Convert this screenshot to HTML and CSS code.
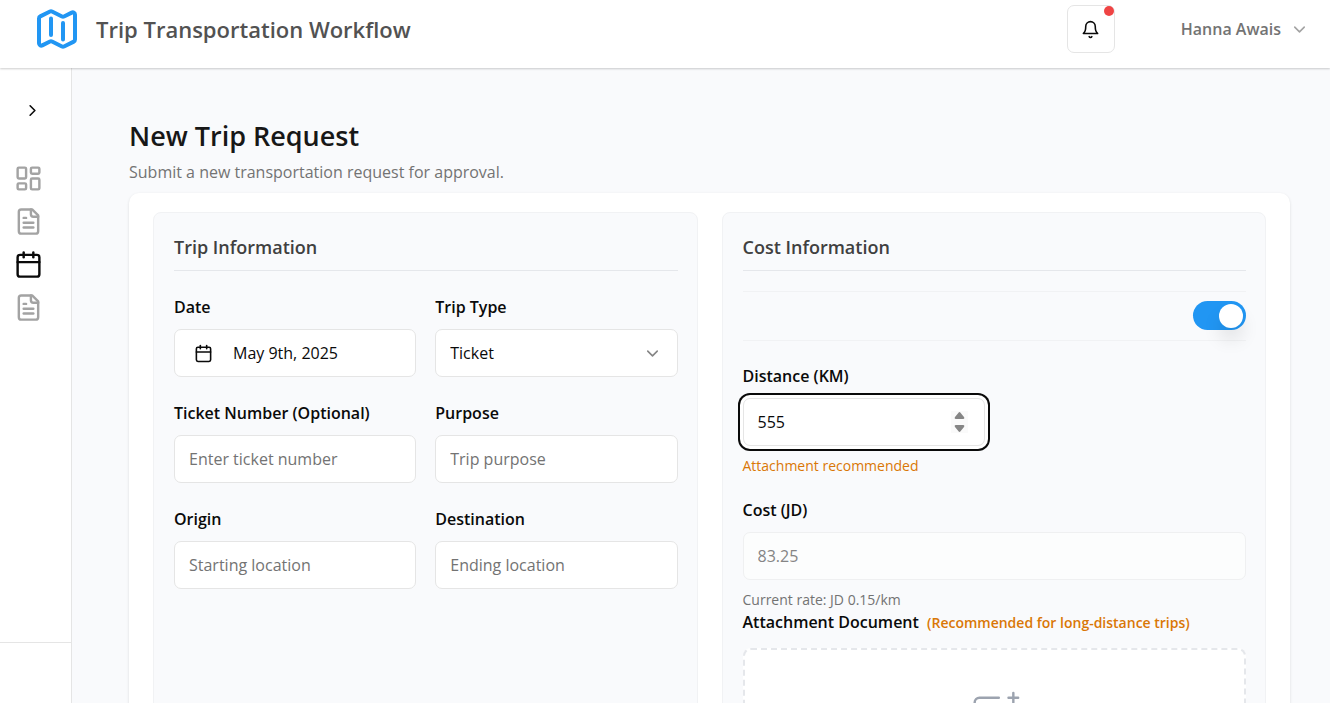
FILE: index.html
```html
<!DOCTYPE html>
<html lang="en">
<head>
<meta charset="utf-8">
<meta name="viewport" content="width=device-width, initial-scale=1">
<title>Trip Transportation Workflow</title>
<link rel="stylesheet" href="styles.css">
</head>
<body>
<div class="shell">
  <header class="topbar">
    <a class="brand" href="#">
      <svg class="brand-mark" viewBox="0 0 24 24" aria-hidden="true"><path d="M9 6.75V15m6-6v8.25m.503 3.498 4.875-2.437c.381-.19.622-.58.622-1.006V4.82c0-.836-.88-1.38-1.628-1.006l-3.869 1.934c-.317.159-.69.159-1.006 0L9.503 3.252a1.125 1.125 0 0 0-1.006 0L3.622 5.689C3.24 5.88 3 6.27 3 6.695V19.18c0 .836.88 1.38 1.628 1.006l3.869-1.934c.317-.159.69-.159 1.006 0l4.994 2.497c.317.158.69.158 1.006 0Z"/></svg>
      <span class="brand-name">Trip Transportation Workflow</span>
    </a>
    <div class="topbar-actions">
      <button class="bell" type="button" aria-label="Notifications">
        <svg class="icon-sm" viewBox="0 0 24 24" aria-hidden="true"><path d="M6 8a6 6 0 0 1 12 0c0 7 3 9 3 9H3s3-2 3-9"/><path d="M10.3 21a1.94 1.94 0 0 0 3.4 0"/></svg>
        <span class="bell-dot"></span>
      </button>
      <button class="user" type="button">
        Hanna Awais
        <svg class="icon-sm chevron" viewBox="0 0 24 24" aria-hidden="true"><path d="m6 9 6 6 6-6"/></svg>
      </button>
    </div>
  </header>

  <div class="body">
    <aside class="sidebar">
      <button class="expand" type="button" aria-label="Expand sidebar">
        <svg class="icon-sm" viewBox="0 0 24 24" aria-hidden="true"><path d="m9 18 6-6-6-6"/></svg>
      </button>
      <nav class="nav">
        <a class="nav-link" href="#" aria-label="Dashboard">
          <svg class="icon-lg" viewBox="0 0 24 24" aria-hidden="true"><rect width="7" height="9" x="3" y="3" rx="1"/><rect width="7" height="5" x="14" y="3" rx="1"/><rect width="7" height="9" x="14" y="12" rx="1"/><rect width="7" height="5" x="3" y="16" rx="1"/></svg>
        </a>
        <a class="nav-link" href="#" aria-label="Requests">
          <svg class="icon-lg" viewBox="0 0 24 24" aria-hidden="true"><path d="M15 2H6a2 2 0 0 0-2 2v16a2 2 0 0 0 2 2h12a2 2 0 0 0 2-2V7Z"/><path d="M14 2v4a2 2 0 0 0 2 2h4"/><path d="M10 9H8"/><path d="M16 13H8"/><path d="M16 17H8"/></svg>
        </a>
        <a class="nav-link nav-link-active" href="#" aria-label="New trip" aria-current="page">
          <svg class="icon-lg" viewBox="0 0 24 24" aria-hidden="true"><path d="M8 2v4"/><path d="M16 2v4"/><rect width="18" height="18" x="3" y="4" rx="2"/><path d="M3 10h18"/></svg>
        </a>
        <a class="nav-link" href="#" aria-label="Reports">
          <svg class="icon-lg" viewBox="0 0 24 24" aria-hidden="true"><path d="M15 2H6a2 2 0 0 0-2 2v16a2 2 0 0 0 2 2h12a2 2 0 0 0 2-2V7Z"/><path d="M14 2v4a2 2 0 0 0 2 2h4"/><path d="M10 9H8"/><path d="M16 13H8"/><path d="M16 17H8"/></svg>
        </a>
      </nav>
      <div class="sidebar-footer"></div>
    </aside>

    <main class="main">
      <h1 class="page-title">New Trip Request</h1>
      <p class="page-subtitle">Submit a new transportation request for approval.</p>

      <form class="card">
        <section class="panel">
          <h2 class="panel-title">Trip Information</h2>
          <div class="grid">
            <div class="field">
              <label class="label" for="date">Date</label>
              <button class="control date-button" id="date" type="button">
                <svg class="icon-sm" viewBox="0 0 24 24" aria-hidden="true"><path d="M8 2v4"/><path d="M16 2v4"/><rect width="18" height="18" x="3" y="4" rx="2"/><path d="M3 10h18"/></svg>
                May 9th, 2025
              </button>
            </div>
            <div class="field">
              <label class="label" for="type">Trip Type</label>
              <div class="select-wrap">
                <select class="control select" id="type"><option>Ticket</option></select>
                <svg class="icon-sm select-arrow" viewBox="0 0 24 24" aria-hidden="true"><path d="m6 9 6 6 6-6"/></svg>
              </div>
            </div>
            <div class="field">
              <label class="label" for="ticket">Ticket Number (Optional)</label>
              <input class="control" id="ticket" type="text" placeholder="Enter ticket number">
            </div>
            <div class="field">
              <label class="label" for="purpose">Purpose</label>
              <input class="control" id="purpose" type="text" placeholder="Trip purpose">
            </div>
            <div class="field">
              <label class="label" for="origin">Origin</label>
              <input class="control" id="origin" type="text" placeholder="Starting location">
            </div>
            <div class="field">
              <label class="label" for="destination">Destination</label>
              <input class="control" id="destination" type="text" placeholder="Ending location">
            </div>
          </div>
        </section>

        <section class="panel">
          <h2 class="panel-title">Cost Information</h2>
          <div class="toggle-row">
            <input class="switch" type="checkbox" role="switch" aria-label="Calculate cost by distance" checked>
          </div>
          <div class="grid">
            <div class="field">
              <label class="label" for="distance">Distance (KM)</label>
              <div class="number-wrap">
                <input class="control control-focus number" id="distance" type="number" value="555">
                <svg class="stepper" viewBox="0 0 17 22" aria-hidden="true"><path d="M7.5 1.8q1-1.4 2 0l3.700 4.500q.6 1.700-.9 1.700H4.700q-1.500 0-.9-1.700z"/><path d="M7.500 20.200q1 1.400 2 0l3.700-4.500q.6-1.700-.9-1.700H4.700q-1.500 0-.9 1.700z"/></svg>
              </div>
              <p class="hint hint-warn">Attachment recommended</p>
            </div>
          </div>
          <div class="field cost-field">
            <label class="label" for="cost">Cost (JD)</label>
            <input class="control" id="cost" type="text" value="83.25" disabled>
            <p class="hint">Current rate: JD 0.15/km</p>
          </div>
          <div class="upload">
            <label class="label upload-label" for="file">Attachment Document <span class="upload-note">(Recommended for long-distance trips)</span></label>
            <button class="dropzone" id="file" type="button">
              <svg class="dropzone-icon" viewBox="0 0 48 48" aria-hidden="true"><path d="M28 8H12a4 4 0 00-4 4v20m32-12v8m0 0v8a4 4 0 01-4 4H12a4 4 0 01-4-4v-4m32-4l-3.172-3.172a4 4 0 00-5.656 0L28 28M8 32l9.172-9.172a4 4 0 015.656 0L28 28m0 0l4 4m4-24h8m-4-4v8m-12 4h.02"/></svg>
            </button>
          </div>
        </section>
      </form>
    </main>
  </div>
</div>
</body>
</html>
```
FILE: styles.css
```css
*, *::before, *::after { box-sizing: border-box; }

body {
  margin: 0;
  font-family: "Open Sans", "Noto Sans", sans-serif;
  font-size: 16px;
  line-height: 24px;
  color: #0a0a0a;
  background: #f9fafc;
}

h1, h2, p { margin: 0; }
button, input, select { font: inherit; color: inherit; }
button { cursor: pointer; }
a { color: inherit; text-decoration: none; }

svg {
  flex: none;
  fill: none;
  stroke: currentColor;
  stroke-width: 2;
  stroke-linecap: round;
  stroke-linejoin: round;
}
.icon-sm { width: 19px; height: 19px; }
.icon-lg { width: 29px; height: 29px; }

.shell { display: flex; flex-direction: column; height: 100vh; }

/* Top bar */
.topbar {
  position: relative;
  display: flex;
  justify-content: space-between;
  align-items: center;
  padding: 5px 21px 15px 33px;
  background: #fff;
  box-shadow: 0 1px 2px rgba(0, 0, 0, .2);
}
.brand { display: flex; align-items: center; gap: 15px; }
.brand-mark { width: 48px; height: 48px; color: #2196f3; }
.brand-name { font-size: 22px; line-height: 28px; font-weight: 600; color: #525252; }
.topbar-actions { display: flex; align-items: center; gap: 66px; }
.bell {
  position: relative;
  display: grid;
  place-items: center;
  width: 48px;
  height: 48px;
  padding: 0;
  border: 1px solid #e5e5e5;
  border-radius: 7px;
  background: #fff;
}
.bell-dot {
  position: absolute;
  top: 0;
  right: 0;
  width: 10px;
  height: 10px;
  border-radius: 50%;
  background: #ef4444;
}
.user {
  display: flex;
  align-items: center;
  gap: 9px;
  padding: 0;
  border: 0;
  background: none;
  font-weight: 600;
  color: #737373;
}
.chevron { color: #a3a3a3; }

/* Sidebar */
.body { display: flex; flex: 1; min-height: 0; }
.sidebar {
  display: flex;
  flex-direction: column;
  flex: none;
  width: 72px;
  background: #fff;
  border-right: 1px solid #e5e5e5;
}
.expand {
  display: flex;
  margin: 33px 0 44px 23px;
  padding: 0;
  border: 0;
  background: none;
  align-self: flex-start;
}
.nav { display: flex; flex-direction: column; gap: 14px; padding-left: 14px; flex: 1; }
.nav-link { display: flex; color: #a3a3a3; }
.nav-link-active { color: #0a0a0a; }
.sidebar-footer { height: 61px; border-top: 1px solid #e5e5e5; }

/* Page */
.main {
  flex: 1;
  min-width: 0;
  overflow-y: auto;
  scrollbar-width: none;
  padding: 50px 40px 40px 57px;
}
.page-title { font-size: 27px; line-height: 36px; font-weight: 600; color: #171717; }
.page-subtitle { margin: 6px 0 9px; color: #737373; }

.card {
  display: grid;
  grid-template-columns: 1fr 1fr;
  gap: 24px;
  padding: 19px 24px 24px;
  border-radius: 10px;
  background: #fff;
  box-shadow: 0 1px 3px rgba(0, 0, 0, .12);
}
.panel {
  min-width: 0;
  padding: 20px 19px 20px 20px;
  border: 1px solid #f1f2f4;
  border-radius: 8px;
  background: #f9fafc;
}
.panel-title {
  margin-bottom: 24px;
  padding-bottom: 9px;
  border-bottom: 1px solid #e5e7eb;
  font-size: 18px;
  line-height: 28px;
  font-weight: 600;
  color: #404040;
}
.grid { display: grid; grid-template-columns: 1fr 1fr; gap: 24px 19px; }
.field { display: flex; flex-direction: column; min-width: 0; }
.label { margin-bottom: 10px; font-weight: 600; }

.control {
  width: 100%;
  height: 48px;
  padding: 0 14px;
  border: 1px solid #e5e5e5;
  border-radius: 7px;
  background: #fff;
  outline: none;
}
.control::placeholder { color: #737373; opacity: 1; }
.control:disabled { color: #858585; background: #fcfdfd; border-color: #eff0f1; }
.control-focus { box-shadow: 0 0 0 3px #fff, 0 0 0 5px #0a0a0a; }
.date-button { display: flex; align-items: center; gap: 20px; padding: 0 19px; }

.select-wrap, .number-wrap { display: grid; align-items: center; }
.select-wrap > *, .number-wrap > * { grid-area: 1 / 1; }
.select { appearance: none; }
.select-arrow { justify-self: end; margin-right: 16px; color: #858585; pointer-events: none; }
.number { appearance: textfield; }
.number::-webkit-inner-spin-button { appearance: none; margin: 0; }
.stepper {
  justify-self: end;
  width: 17px;
  height: 22px;
  margin-right: 17px;
  background: #fafafa;
  fill: #858585;
  stroke: none;
  pointer-events: none;
}

.hint { margin-top: 10px; font-size: 14px; line-height: 20px; color: #737373; }
.hint-warn { color: #d97706; }

.toggle-row {
  display: flex;
  justify-content: flex-end;
  margin: -4px 0 23px;
  padding: 9px 0 10px;
  border-top: 1px solid #f1f2f4;
  border-bottom: 1px solid #f1f2f4;
}
.switch {
  appearance: none;
  display: flex;
  align-items: center;
  justify-content: flex-end;
  width: 53px;
  height: 29px;
  margin: 0;
  padding: 0 3px;
  border-radius: 15px;
  background: #2196f3;
}
.switch::before {
  content: "";
  width: 24px;
  height: 24px;
  border-radius: 50%;
  background: #fff;
  box-shadow: 0 12px 18px rgba(0, 0, 0, .1);
}

.cost-field { margin-top: 22px; }
.upload { display: flex; flex-direction: column; }
.upload-label { margin-bottom: 13px; }
.upload-note { margin-left: 4px; font-size: 14px; color: #d97706; }
.dropzone {
  display: flex;
  justify-content: center;
  padding: 38px;
  border: 2px dashed #e5e7eb;
  border-radius: 8px;
  background: #fff;
}
.dropzone-icon { width: 58px; height: 58px; color: #9ca3af; }
```
